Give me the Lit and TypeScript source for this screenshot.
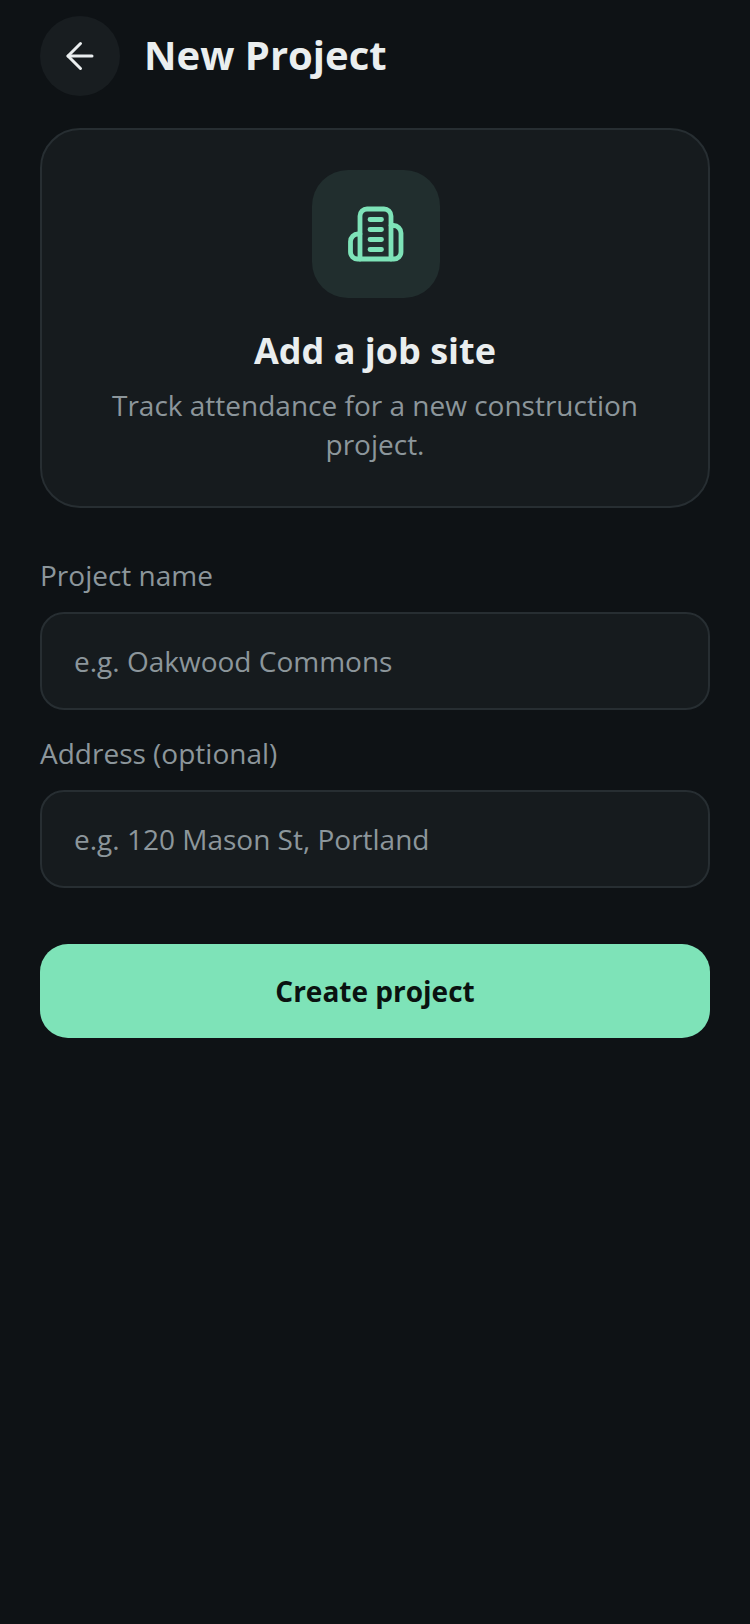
import { LitElement, html, css } from "lit";
import { customElement } from "lit/decorators.js";

@customElement("app-root")
export class AppRoot extends LitElement {
  static styles = css`
    :host { display: block; min-height: 1624px; background: #0e1215; font-family: "Open Sans", sans-serif; box-sizing: border-box; padding: 16px 40px 0; }
    * { box-sizing: border-box; }
    .head { display: flex; align-items: center; gap: 24px; height: 80px; }
    .back { width: 80px; height: 80px; border-radius: 50%; background: #181d20; display: flex; align-items: center; justify-content: center; }
    h1 { margin: 0 0 2px; font-size: 40px; line-height: 52px; font-weight: 700; color: #eaeeef; }
    .card { margin-top: 32px; height: 380px; border: 2px solid #272e32; border-radius: 40px; background: #161b1e; display: flex; flex-direction: column; align-items: center; padding-top: 40px; }
    .tile { width: 128px; height: 128px; margin-left: 1px; border-radius: 36px; background: #212e2e; display: flex; align-items: center; justify-content: center; }
    h2 { margin: 30px 0 0; font-size: 36px; line-height: 46px; font-weight: 700; color: #eaeeef; }
    p { margin: 12px 0 0; width: 560px; text-align: center; font-size: 28px; line-height: 39.2px; color: #8c969b; }
    label { display: block; margin-top: 48px; font-size: 28px; line-height: 38px; color: #8c969b; }
    label.next { margin-top: 24px; }
    .input { margin-top: 18px; height: 98px; border: 2px solid #272e32; border-radius: 24px; background: #161b1e; padding: 0 32px; display: flex; align-items: center; font-size: 28px; color: #8c969b; }
    .btn { margin-top: 56px; height: 94px; border-radius: 28px; background: #7ee3b8; display: flex; align-items: center; justify-content: center; font-size: 28px; font-weight: 700; color: #0a1210; }
  `;
  render() {
    return html`
      <div class="head">
        <div class="back">
          <svg width="36" height="36" viewBox="0 0 36 36" fill="none" stroke="#eaeeef" stroke-width="3" stroke-linecap="round" stroke-linejoin="round"><path d="M30 18H6"/><path d="M18.5 5.5 6 18l12.5 12.5"/></svg>
        </div>
        <h1>New Project</h1>
      </div>
      <div class="card">
        <div class="tile">
          <svg width="60" height="60" viewBox="0 0 60 60" fill="none" stroke="#7ee3b8" stroke-width="4.8" stroke-linecap="round" stroke-linejoin="round">
            <path d="M14 55V12a7 7 0 0 1 7-7h17a7 7 0 0 1 7 7v43"/>
            <path d="M14 30h-2a7.5 7.5 0 0 0-7.5 7.5V48a7 7 0 0 0 7 7h36.500a7 7 0 0 0 7-7V29a7.500 7.500 0 0 0-7.500-7.500H45"/>
            <path d="M24 15.500H35.500M24 25.500H35.500M24 35.500H35.500M24 45.500H35.500"/>
          </svg>
        </div>
        <h2>Add a job site</h2>
        <p>Track attendance for a new construction project.</p>
      </div>
      <label>Project name</label>
      <div class="input">e.g. Oakwood Commons</div>
      <label class="next">Address (optional)</label>
      <div class="input">e.g. 120 Mason St, Portland</div>
      <div class="btn">Create project</div>
    `;
  }
}
